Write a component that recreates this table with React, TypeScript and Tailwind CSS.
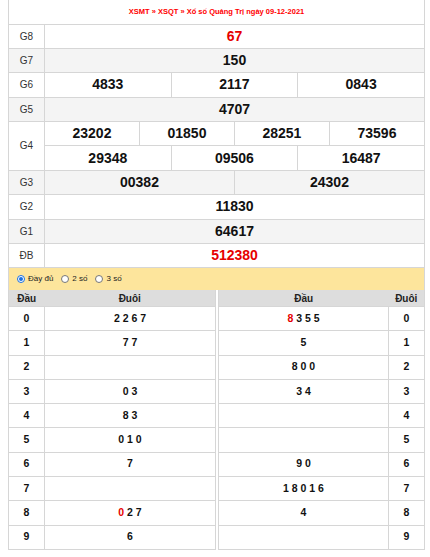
import React from 'react';

type Cell = { v: string; red?: boolean };

const BORDER = 'border border-[#d6d6d6]';

// prize rows: label + list of numbers (each row spans 12 grid columns)
const prizes: { label: string; rows: string[][]; red?: boolean }[] = [
  { label: 'G8', rows: [['67']], red: true },
  { label: 'G7', rows: [['150']] },
  { label: 'G6', rows: [['4833', '2117', '0843']] },
  { label: 'G5', rows: [['4707']] },
  { label: 'G4', rows: [['23202', '01850', '28251', '73596'], ['29348', '09506', '16487']] },
  { label: 'G3', rows: [['00382', '24302']] },
  { label: 'G2', rows: [['11830']] },
  { label: 'G1', rows: [['64617']] },
  { label: 'ĐB', rows: [['512380']], red: true },
];

const left: Cell[][] = [
  [{ v: '0' }, { v: '2 2 6 7' }],
  [{ v: '1' }, { v: '7 7' }],
  [{ v: '2' }, { v: '' }],
  [{ v: '3' }, { v: '0 3' }],
  [{ v: '4' }, { v: '8 3' }],
  [{ v: '5' }, { v: '0 1 0' }],
  [{ v: '6' }, { v: '7' }],
  [{ v: '7' }, { v: '' }],
  [{ v: '8' }, { v: '2 7', red: true }],
  [{ v: '9' }, { v: '6' }],
];

const right: string[] = ['3 5 5', '5', '8 0 0', '3 4', '', '', '9 0', '1 8 0 1 6', '4', ''];

function Radio({ checked, label }: { checked?: boolean; label: string }) {
  return (
    <span className="flex items-center gap-[3px]">
      <span
        className={
          'flex h-[8px] w-[8px] items-center justify-center rounded-full border bg-white ' +
          (checked ? 'border-[#1a6fe0]' : 'border-[#767676]')
        }
      >
        {checked && <span className="h-[4px] w-[4px] rounded-full bg-[#1a6fe0]" />}
      </span>
      <span className="text-[8px] text-[#222]">{label}</span>
    </span>
  );
}

export default function App() {
  return (
    <div className="min-h-[557px] bg-white font-['Liberation_Sans',Arial,sans-serif]">
      <div className="ml-[8px] w-[417px]">
        <table className="w-full table-fixed border-collapse">
          <colgroup>
            <col className="w-[36px]" />
            {Array.from({ length: 12 }).map((_, i) => (
              <col key={i} />
            ))}
          </colgroup>
          <tbody>
            <tr>
              <td colSpan={13} className="h-[24px] border-x border-b border-[#d6d6d6] p-0 text-center text-[7.5px] font-bold text-[#ff0000]">
                XSMT » XSQT » Xổ số Quảng Trị ngày 09-12-2021
              </td>
            </tr>
            {prizes.map((p, i) => {
              const bg = i % 2 === 1 ? 'bg-[#f4f4f4]' : 'bg-white';
              return p.rows.map((row, ri) => (
                <tr key={p.label + ri} className={bg}>
                  {ri === 0 && (
                    <td rowSpan={p.rows.length} className={`${BORDER} h-[24.4px] p-0 text-center text-[10px] text-[#333]`}>
                      {p.label}
                    </td>
                  )}
                  {row.map((n) => (
                    <td
                      key={n}
                      colSpan={12 / row.length}
                      className={`${BORDER} h-[24.4px] p-0 text-center text-[14px] font-bold ${p.red ? 'text-[#e60000]' : 'text-[#111]'}`}
                    >
                      {n}
                    </td>
                  ))}
                </tr>
              ));
            })}
          </tbody>
        </table>

        {/* filter bar */}
        <div className="flex h-[22px] items-center gap-[8px] border-x border-[#d6d6d6] bg-[#fde59c] pl-[8px]">
          <Radio checked label="Đầy đủ" />
          <Radio label="2 số" />
          <Radio label="3 số" />
        </div>

        {/* loto tables */}
        <div className="flex gap-[2px]">
          <table className="w-[208px] table-fixed border-collapse">
            <colgroup>
              <col className="w-[36px]" />
              <col />
            </colgroup>
            <thead>
              <tr className="bg-[#dddddd]">
                <th className="h-[16px] border-l border-[#d6d6d6] p-0 text-center text-[10px] font-bold text-[#222]">Đầu</th>
                <th className="h-[16px] border-r border-[#d6d6d6] p-0 text-center text-[10px] font-bold text-[#222]">Đuôi</th>
              </tr>
            </thead>
            <tbody>
              {left.map(([h, t]) => (
                <tr key={h.v}>
                  <td className={`${BORDER} h-[24.3px] p-0 text-center text-[10.5px] font-bold text-[#111]`}>{h.v}</td>
                  <td className={`${BORDER} h-[24.3px] p-0 text-center text-[10.5px] font-bold text-[#111]`}>
                    {t.red && <span className="text-[#e60000]">0 </span>}
                    {t.v}
                  </td>
                </tr>
              ))}
            </tbody>
          </table>
          <table className="w-[207px] table-fixed border-collapse">
            <colgroup>
              <col />
              <col className="w-[36px]" />
            </colgroup>
            <thead>
              <tr className="bg-[#dddddd]">
                <th className="h-[16px] border-l border-[#d6d6d6] p-0 text-center text-[10px] font-bold text-[#222]">Đầu</th>
                <th className="h-[16px] border-r border-[#d6d6d6] p-0 text-center text-[10px] font-bold text-[#222]">Đuôi</th>
              </tr>
            </thead>
            <tbody>
              {right.map((v, i) => (
                <tr key={i}>
                  <td className={`${BORDER} h-[24.3px] p-0 text-center text-[10.5px] font-bold text-[#111]`}>
                    {i === 0 && <span className="text-[#e60000]">8 </span>}
                    {v}
                  </td>
                  <td className={`${BORDER} h-[24.3px] p-0 text-center text-[10.5px] font-bold text-[#111]`}>{i}</td>
                </tr>
              ))}
            </tbody>
          </table>
        </div>
      </div>
    </div>
  );
}
